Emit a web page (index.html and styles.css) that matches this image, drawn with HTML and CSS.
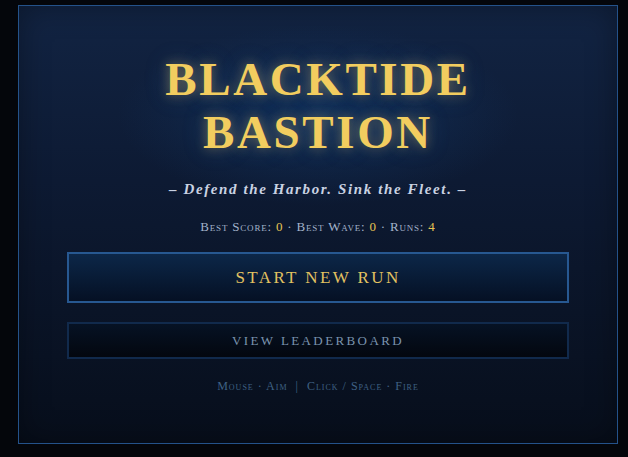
FILE: index.html
```html
<!DOCTYPE html>
<html lang="en">
<head>
    <meta charset="UTF-8">
    <meta name="viewport" content="width=device-width, initial-scale=1.0">
    <title>Blacktide Bastion</title>
    <link rel="stylesheet" href="styles.css">
</head>
<body>
    <main class="menu">
        <h1 class="title">Blacktide<br>Bastion</h1>
        <p class="tagline">&ndash; Defend the Harbor. Sink the Fleet. &ndash;</p>
        <p class="stats">
            Best Score: <span class="num">0</span> &middot; Best Wave: <span class="num">0</span> &middot; Runs: <span class="num">4</span>
        </p>
        <button class="btn btn-start">Start New Run</button>
        <button class="btn btn-board">View Leaderboard</button>
        <p class="controls">Mouse &middot; Aim &nbsp;|&nbsp; Click / Space &middot; Fire</p>
    </main>
</body>
</html>
```

FILE: styles.css
```css
*{
    margin: 0;
    padding: 0;
    box-sizing: border-box;
}
body{
    height: 100vh;
    background-color: #04060b;
    padding: 5px 10px 13px 18px;
    display: flex;
    font-family: "Liberation Serif", "DejaVu Serif", serif;
}
.menu{
    width: 600px;
    height: 439px;
    border: 1px solid #24528a;
    background:
        radial-gradient(ellipse 200px 90px at 50% 25%, rgba(20, 60, 110, 0.55), rgba(20, 60, 110, 0) 100%),
        linear-gradient(#122443 0%, #0d1a33 40%, #070e1b 100%);
    box-shadow: inset 0 0 30px rgba(0, 0, 0, 0.35);
    display: flex;
    flex-direction: column;
    align-items: center;
    padding: 47px 48px 0 48px;
}
.title{
    font-size: 47px;
    line-height: 53px;
    font-weight: bold;
    text-transform: uppercase;
    letter-spacing: 2.6px;
    text-align: center;
    color: #f2cd5f;
    text-shadow: 0 0 12px rgba(240, 200, 90, 0.4), 0 0 24px rgba(90, 150, 230, 0.25);
}
.tagline{
    margin-top: 22px;
    font-size: 15px;
    font-style: italic;
    font-weight: bold;
    letter-spacing: 1.6px;
    color: #c9d2e2;
}
.stats{
    margin-top: 21px;
    font-size: 13px;
    font-variant: small-caps;
    letter-spacing: 0.8px;
    color: #a3b3ca;
}
.num{
    color: #e7c453;
}
.btn{
    width: 502px;
    font-family: inherit;
    text-transform: uppercase;
    cursor: pointer;
}
.btn-start{
    margin-top: 17px;
    height: 51px;
    border: 2px solid #275891;
    background: linear-gradient(#0c2748, #051024);
    color: #e2c261;
    font-size: 17px;
    letter-spacing: 2.4px;
}
.btn-board{
    margin-top: 19px;
    height: 37px;
    border: 2px solid #112a4c;
    background: linear-gradient(#061224, #03070f);
    color: #7a93ae;
    font-size: 13px;
    letter-spacing: 2.4px;
}
.controls{
    margin-top: 20px;
    font-size: 12px;
    font-variant: small-caps;
    letter-spacing: 1px;
    color: #3f6184;
}
```
